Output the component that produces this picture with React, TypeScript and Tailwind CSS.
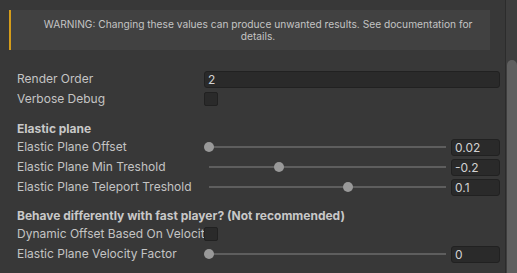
import type { ReactNode } from 'react';

type SliderRow = { label: string; value: string; pos: number };

const Label = ({ children, bold }: { children: ReactNode; bold?: boolean }) =>
  bold ? (
    <div className="whitespace-nowrap text-[12px] font-bold leading-[18px] text-[#c8c8c8]">{children}</div>
  ) : (
    <div className="w-[187px] shrink-0 overflow-hidden whitespace-nowrap text-[12px] leading-[18px] text-[#c4c4c4]">
      {children}
    </div>
  );

const Field = ({ value, className }: { value: string; className?: string }) => (
  <div
    className={`h-[17px] rounded-[3px] border border-[#212121] bg-[#2a2a2a] pl-[3px] text-[12px] leading-[15px] text-[#d2d2d2] ${className ?? ''}`}
  >
    {value}
  </div>
);

const Checkbox = () => <div className="h-[14px] w-[14px] rounded-[2px] border border-[#212121] bg-[#2a2a2a]" />;

const Slider = ({ label, value, pos }: SliderRow) => (
  <div className="flex h-[18px] items-center">
    <Label>{label}</Label>
    <div className="relative h-[18px] w-[242px]">
      <div className="absolute left-[5px] right-0 top-[8px] h-[2px] bg-[#5e5e5e]" />
      <div
        className="absolute top-[4px] h-[10px] w-[10px] rounded-full bg-[#999999]"
        style={{ left: `${pos * 232}px` }}
      />
    </div>
    <Field value={value} className="ml-[5px] w-[49px]" />
  </div>
);

const elastic: SliderRow[] = [
  { label: 'Elastic Plane Offset', value: '0.02', pos: 0 },
  { label: 'Elastic Plane Min Treshold', value: '-0.2', pos: 0.3 },
  { label: 'Elastic Plane Teleport Treshold', value: '0.1', pos: 0.6 },
];

export default function App() {
  return (
    <div
      className="flex h-[273px] w-[517px] overflow-hidden bg-[#383838]"
      style={{ fontFamily: 'Inter, "Noto Sans", sans-serif' }}
    >
      <div className="flex w-[505px] flex-col">
        <div className="ml-[9px] mt-[10px] flex h-[40px] w-[481px] items-center justify-center border-l-2 border-[#d49c1a] bg-[#414141] pl-[15px] text-center text-[10.2px] leading-[12px] text-[#c4c4c4]">
          WARNING: Changing these values can produce unwanted results. See documentation for details.
        </div>

        <div className="flex flex-col pl-[17px]">
          <div className="mt-[20px] flex h-[18px] items-center">
            <Label>Render Order</Label>
            <Field value="2" className="w-[296px]" />
          </div>
          <div className="mt-[2px] flex h-[18px] items-center">
            <Label>Verbose Debug</Label>
            <Checkbox />
          </div>

          <div className="mt-[12px] flex h-[18px] items-center">
            <Label bold>Elastic plane</Label>
          </div>
          <div className="flex flex-col gap-[2px]">
            {elastic.map((r) => (
              <Slider key={r.label} {...r} />
            ))}
          </div>

          <div className="mt-[11px] flex h-[18px] items-center">
            <Label bold>Behave differently with fast player? (Not recommended)</Label>
          </div>
          <div className="flex h-[18px] items-center">
            <Label>Dynamic Offset Based On Velocity</Label>
            <Checkbox />
          </div>
          <div className="mt-[2px]">
            <Slider label="Elastic Plane Velocity Factor" value="0" pos={0} />
          </div>
        </div>
      </div>

      <div className="flex w-[12px] border-l border-[#2c2c2c] bg-[#3e3e3e]">
        <div className="ml-[1px] mt-[60px] h-[260px] w-[10px] rounded-t-[5px] bg-[#5f5f5f]" />
      </div>
    </div>
  );
}
